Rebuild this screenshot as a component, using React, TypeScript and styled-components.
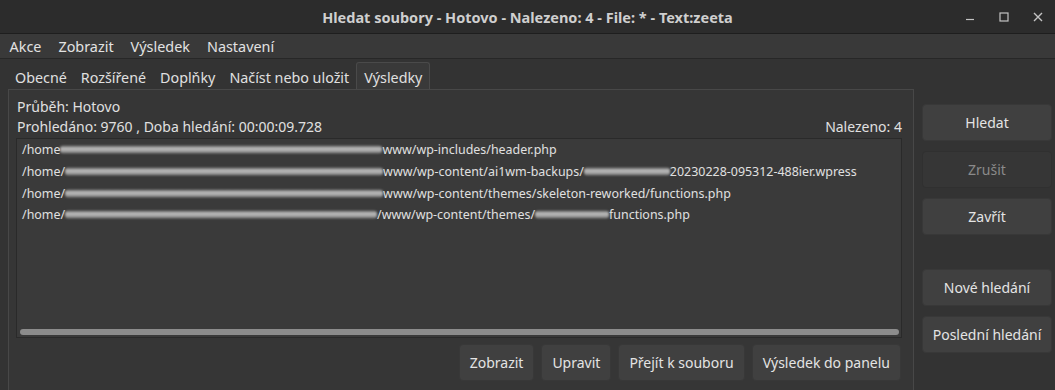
import styled, { createGlobalStyle } from 'styled-components';

const GlobalStyle = createGlobalStyle`
  html, body {
    margin: 0;
    padding: 0;
    background: #2c2c2c;
  }
  body {
    font-family: 'Noto Sans', 'DejaVu Sans', sans-serif;
  }
`;

const Window = styled.div`
  width: 1055px;
  height: 390px;
  display: flex;
  flex-direction: column;
  background: #333333;
  color: #dedede;
  overflow: hidden;
`;

const TitleBar = styled.header`
  flex: none;
  height: 33px;
  display: grid;
  grid-template-columns: 1fr auto 1fr;
  align-items: center;
  background: #2c2c2c;
  border-bottom: 1px solid #1e1e1e;
`;

const Title = styled.h1`
  grid-column: 2;
  margin: 0;
  font-size: 14.5px;
  font-weight: 700;
  color: #cfcfcf;
`;

const Controls = styled.div`
  justify-self: end;
  display: flex;
`;

const ControlButton = styled.span`
  width: 34px;
  height: 33px;
  display: grid;
  place-items: center;
  color: #c4c4c4;
`;

const MenuBar = styled.nav`
  flex: none;
  height: 24px;
  display: flex;
  align-items: center;
  padding-left: 1px;
  background: #393939;
  border-bottom: 1px solid #272727;
`;

const MenuItem = styled.span`
  padding: 0 8.5px;
  font-size: 14.4px;
  color: #e2e2e2;
`;

const Body = styled.div`
  flex: 1;
  display: flex;
  min-height: 0;
`;

const LeftColumn = styled.section`
  flex: 1;
  display: flex;
  flex-direction: column;
  margin-left: 8px;
`;

const TabBar = styled.div`
  flex: none;
  height: 30px;
  display: flex;
  align-items: flex-end;
`;

const Tab = styled.span<{ $active?: boolean }>`
  height: 27px;
  display: flex;
  align-items: center;
  padding: 2px ${(p) => (p.$active ? 7 : 6)}px 0;
  box-sizing: border-box;
  font-size: 14.3px;
  color: #e0e0e0;
  white-space: nowrap;
  border: 1px solid ${(p) => (p.$active ? '#4a4a4a' : 'transparent')};
  border-bottom: none;
  border-radius: 3px 3px 0 0;
  background: ${(p) => (p.$active ? '#393939' : 'transparent')};
`;

const TabPanel = styled.div`
  flex: 1;
  display: flex;
  flex-direction: column;
  padding: 6px 11px 4px 7px;
  background: #363636;
  border: 1px solid #484848;
  border-bottom: none;
`;

const InfoLine = styled.div`
  height: 20px;
  display: flex;
  align-items: center;
  justify-content: space-between;
  padding-left: 1px;
  font-size: 14px;
  color: #e0e0e0;
`;

const ResultList = styled.div`
  margin-top: 2px;
  height: 200px;
  box-sizing: border-box;
  display: flex;
  flex-direction: column;
  background: #3a3a3a;
  border: 1px solid #2a2a2a;
`;

const Rows = styled.div`
  flex: 1;
`;

const Row = styled.div`
  height: 21.7px;
  display: flex;
  align-items: center;
  padding-left: 5px;
  font-size: 12.45px;
  color: #e0e0e0;
  white-space: nowrap;
`;

const Redacted = styled.span<{ $width: number }>`
  display: inline-block;
  flex: none;
  width: ${(p) => p.$width}px;
  height: 9px;
  border-radius: 4px;
  background: linear-gradient(
    180deg,
    transparent 0%,
    #939393 20%,
    #c2c2c2 42%,
    #a6a6a6 60%,
    #949494 80%,
    transparent 100%
  );
  filter: blur(0.8px);
`;

const ScrollTrack = styled.div`
  height: 6px;
  margin: 0 2px 2px 3px;
  border-radius: 3px;
  background: #8c8c8c;
`;

const ActionBar = styled.div`
  display: flex;
  justify-content: flex-end;
  gap: 7px;
  margin-top: 6px;
  padding-right: 1px;
`;

const Button = styled.button<{ $disabled?: boolean }>`
  height: 37px;
  padding: 0 10px;
  font-family: inherit;
  font-size: 14px;
  white-space: nowrap;
  color: ${(p) => (p.$disabled ? '#8a8a8a' : '#e4e4e4')};
  background: ${(p) => (p.$disabled ? '#363636' : '#404040')};
  border: 1px solid ${(p) => (p.$disabled ? '#303030' : '#383838')};
  border-radius: 4px;
`;

const RightColumn = styled.aside`
  flex: none;
  width: 130px;
  display: flex;
  flex-direction: column;
  gap: 10px;
  margin: 0 3px 0 8px;
  padding-top: 45px;

  & > button {
    padding: 0;
  }
`;

const Spacer = styled.div`
  height: 14px;
`;

function CloseIcon() {
  return (
    <svg width="10" height="10" viewBox="0 0 10 10">
      <path d="M1 1 L9 9 M9 1 L1 9" stroke="currentColor" strokeWidth="1.4" />
    </svg>
  );
}

function MaxIcon() {
  return (
    <svg width="10" height="10" viewBox="0 0 10 10">
      <rect x="1" y="1" width="8" height="8" fill="none" stroke="currentColor" strokeWidth="1.2" />
    </svg>
  );
}

function MinIcon() {
  return (
    <svg width="10" height="10" viewBox="0 0 10 10">
      <path d="M1 7.5 H9" stroke="currentColor" strokeWidth="1.2" />
    </svg>
  );
}

export default function App() {
  return (
    <>
      <GlobalStyle />
      <Window>
        <TitleBar>
          <Title>Hledat soubory - Hotovo - Nalezeno: 4 - File: * - Text:zeeta</Title>
          <Controls>
            <ControlButton>
              <MinIcon />
            </ControlButton>
            <ControlButton>
              <MaxIcon />
            </ControlButton>
            <ControlButton>
              <CloseIcon />
            </ControlButton>
          </Controls>
        </TitleBar>
        <MenuBar>
          <MenuItem>Akce</MenuItem>
          <MenuItem>Zobrazit</MenuItem>
          <MenuItem>Výsledek</MenuItem>
          <MenuItem>Nastavení</MenuItem>
        </MenuBar>
        <Body>
          <LeftColumn>
            <TabBar>
              <Tab>Obecné</Tab>
              <Tab>Rozšířené</Tab>
              <Tab>Doplňky</Tab>
              <Tab>Načíst nebo uložit</Tab>
              <Tab $active>Výsledky</Tab>
            </TabBar>
            <TabPanel>
              <InfoLine>Průběh: Hotovo</InfoLine>
              <InfoLine>
                <span>Prohledáno: 9760 , Doba hledání: 00:00:09.728</span>
                <span>Nalezeno: 4</span>
              </InfoLine>
              <ResultList>
                <Rows>
                  <Row>
                    /home<Redacted $width={322} />www/wp-includes/header.php
                  </Row>
                  <Row>
                    /home/<Redacted $width={318} />www/wp-content/ai1wm-backups/
                    <Redacted $width={86} />20230228-095312-488ier.wpress
                  </Row>
                  <Row>
                    /home/<Redacted $width={318} />www/wp-content/themes/skeleton-reworked/functions.php
                  </Row>
                  <Row>
                    /home/<Redacted $width={312} />/www/wp-content/themes/
                    <Redacted $width={74} />functions.php
                  </Row>
                </Rows>
                <ScrollTrack />
              </ResultList>
              <ActionBar>
                <Button>Zobrazit</Button>
                <Button>Upravit</Button>
                <Button>Přejít k souboru</Button>
                <Button>Výsledek do panelu</Button>
              </ActionBar>
            </TabPanel>
          </LeftColumn>
          <RightColumn>
            <Button>Hledat</Button>
            <Button $disabled>Zrušit</Button>
            <Button>Zavřít</Button>
            <Spacer />
            <Button>Nové hledání</Button>
            <Button>Poslední hledání</Button>
          </RightColumn>
        </Body>
      </Window>
    </>
  );
}
